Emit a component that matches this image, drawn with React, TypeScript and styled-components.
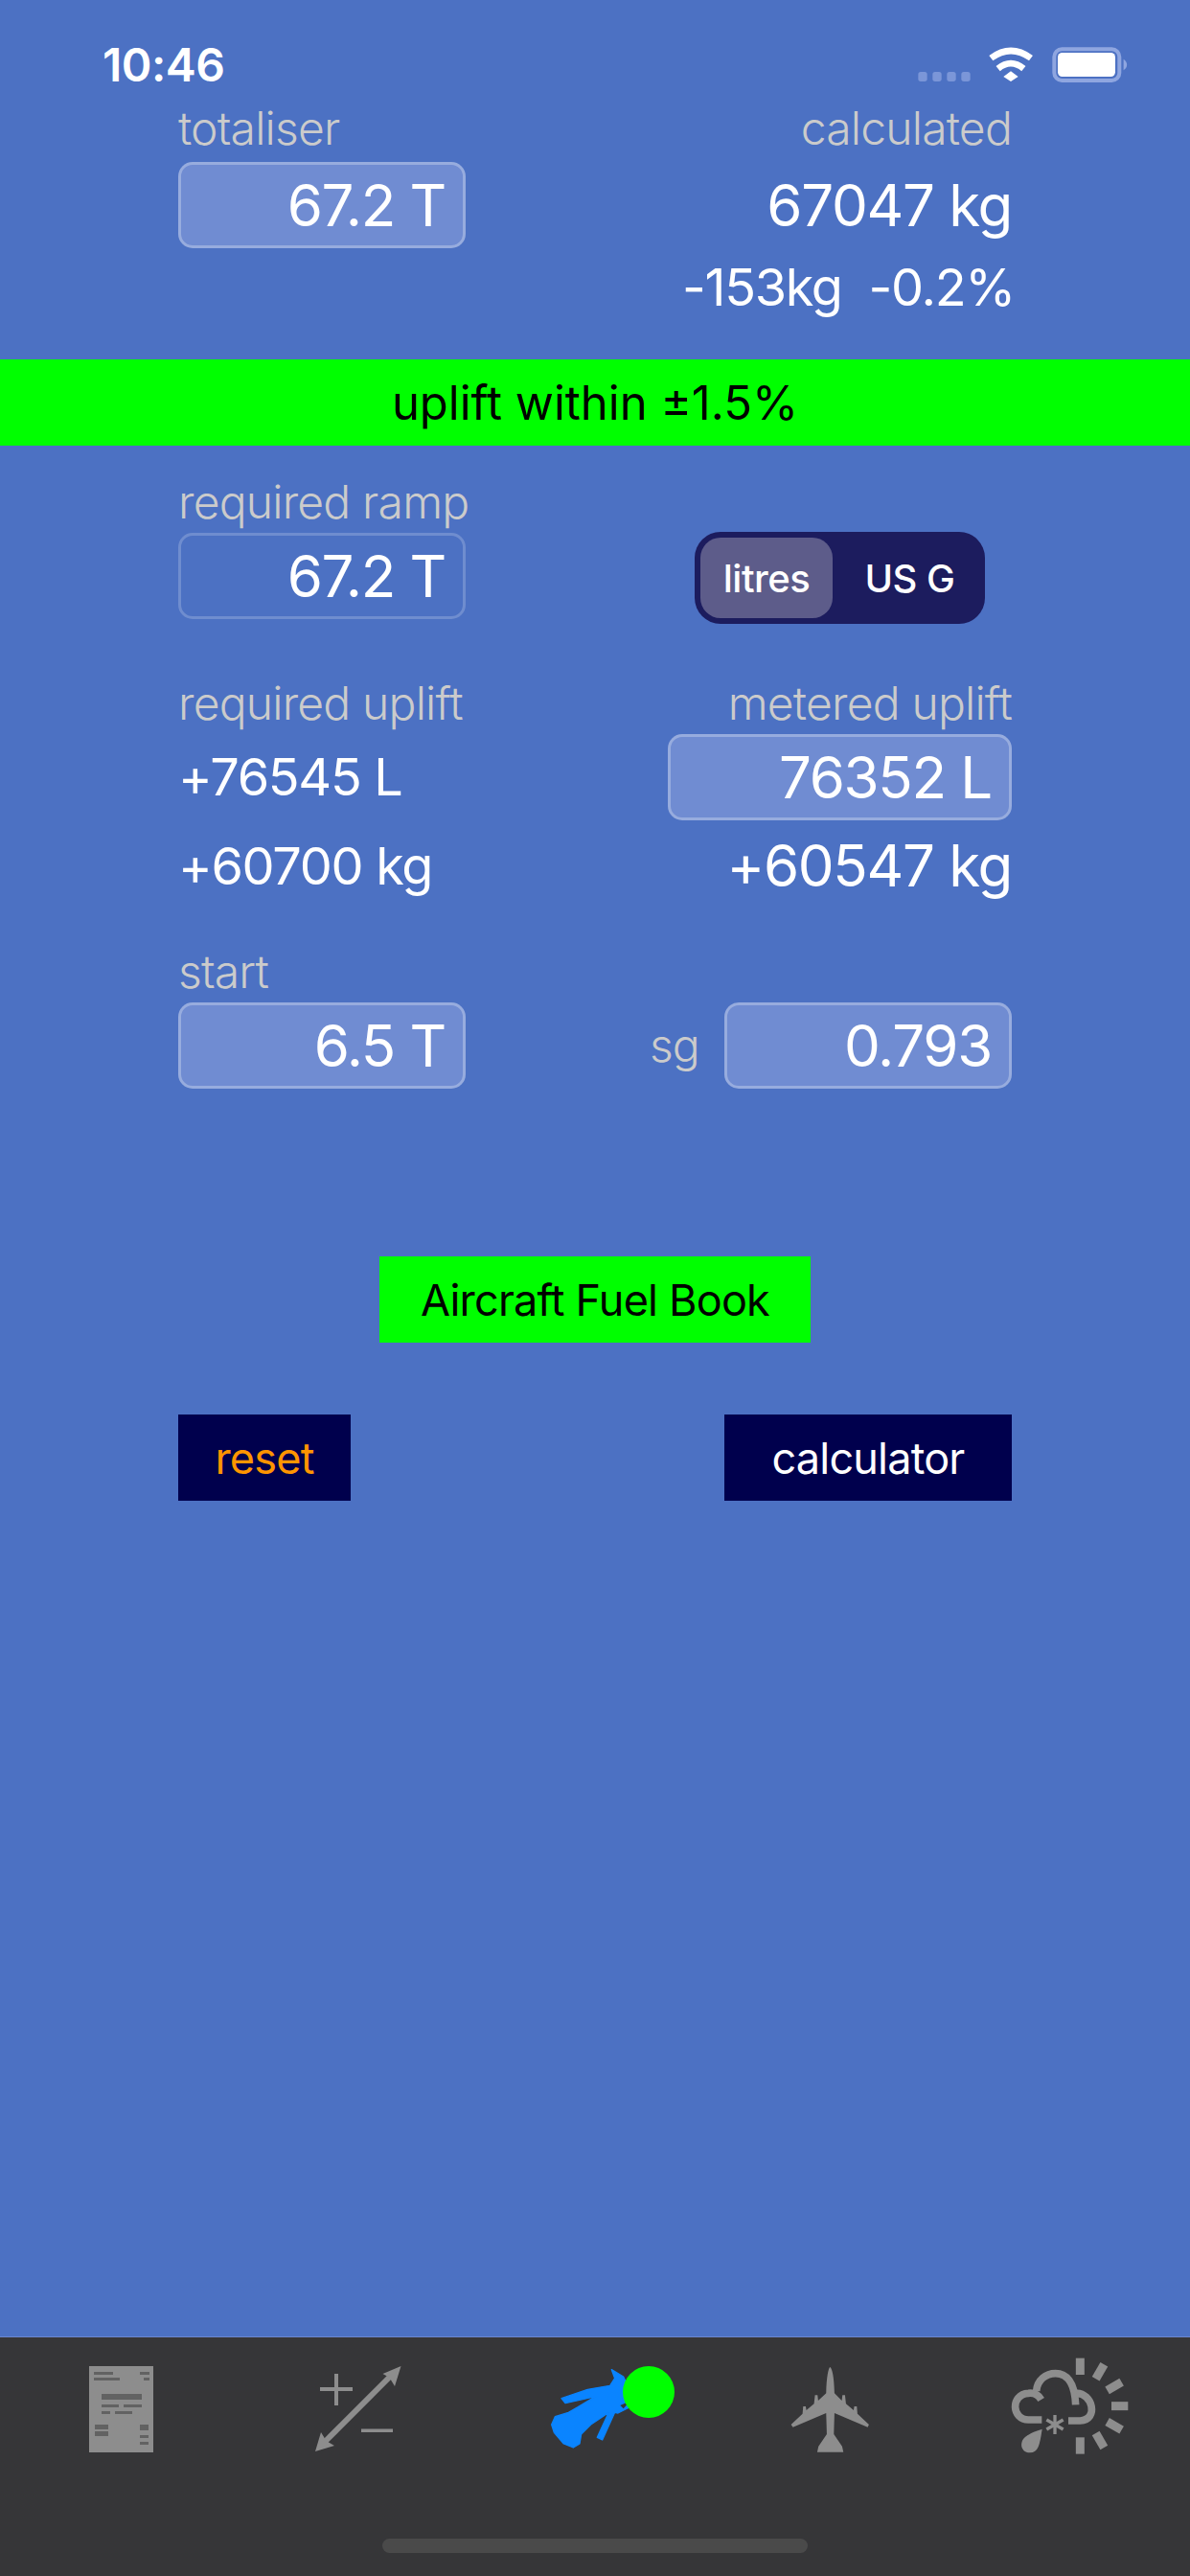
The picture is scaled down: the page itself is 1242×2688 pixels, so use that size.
import React from "react";
import styled, { createGlobalStyle } from "styled-components";

const Global = createGlobalStyle`
  html, body { margin: 0; padding: 0; background: #4c71c3; }
  * { box-sizing: border-box; }
`;

const Screen = styled.div`
  width: 1242px;
  height: 2688px;
  display: flex;
  flex-direction: column;
  background: #4c71c3;
  font-family: Inter, "Liberation Sans", sans-serif;
  color: #fff;
  overflow: hidden;
`;

const StatusBar = styled.div`
  height: 112px;
  flex: none;
  display: flex;
  justify-content: space-between;
  align-items: flex-start;
  padding: 40px 62px 0 107px;
`;

const Time = styled.div`
  font-size: 48px;
  line-height: 56px;
  font-weight: 600;
  letter-spacing: -0.5px;
`;

const StatusIcons = styled.svg`
  width: 230px;
  height: 50px;
  margin-top: 9px;
  display: block;
`;

const Section = styled.div<{ $top?: number }>`
  padding: 0 186px;
  margin-top: ${(p) => p.$top ?? 0}px;
  display: flex;
  justify-content: space-between;
  align-items: flex-start;
  flex: none;
`;

const Col = styled.div<{ $end?: boolean }>`
  display: flex;
  flex-direction: column;
  align-items: ${(p) => (p.$end ? "flex-end" : "flex-start")};
`;

const Label = styled.div<{ $h?: number }>`
  height: ${(p) => p.$h ?? 54}px;
  font-size: 48px;
  line-height: 44px;
  font-weight: 300;
  color: #cbcbcb;
  letter-spacing: -0.8px;
  white-space: nowrap;
`;

const SgLabel = styled(Label)`
  line-height: 54px;
`;

const Field = styled.div<{ $w?: number; $filled?: boolean }>`
  width: ${(p) => p.$w ?? 300}px;
  height: 90px;
  border: 3px solid rgba(255, 255, 255, ${(p) => (p.$filled ? 0.28 : 0.2)});
  border-radius: 15px;
  background: ${(p) => (p.$filled ? "#708cd2" : "transparent")};
  display: flex;
  align-items: center;
  justify-content: flex-end;
  padding-right: 18px;
  font-size: 60px;
  letter-spacing: -1.3px;
  font-weight: 400;
  white-space: nowrap;
`;

const Value = styled.div<{ $size?: number; $h?: number }>`
  font-size: ${(p) => p.$size ?? 60}px;
  line-height: ${(p) => p.$h ?? 90}px;
  letter-spacing: -1.3px;
  white-space: nowrap;
`;

const Delta = styled(Value)`
  margin-right: -3px;
`;

const Banner = styled.div`
  flex: none;
  margin-top: 34px;
  height: 90px;
  background: #00ff00;
  color: #000;
  font-size: 49px;
  display: flex;
  align-items: center;
  justify-content: center;
`;

const Segmented = styled.div`
  width: 303px;
  height: 96px;
  margin: 53px 28px 0 0;
  padding: 6px;
  border-radius: 27px;
  background: #1c1c5e;
  display: flex;
`;

const Segment = styled.div<{ $active?: boolean }>`
  flex: ${(p) => (p.$active ? "0 0 138px" : "1")};
  border-radius: 21px;
  background: ${(p) => (p.$active ? "#5d5c8a" : "transparent")};
  display: flex;
  align-items: center;
  justify-content: center;
  padding-left: ${(p) => (p.$active ? 0 : 8)}px;
  font-size: 40px;
  font-weight: 500;
  letter-spacing: -0.5px;
`;

const SgRow = styled.div`
  display: flex;
  align-items: center;
  gap: 26px;
  margin-top: 54px;
`;

const Center = styled.div`
  flex: none;
  margin-top: 175px;
  display: flex;
  justify-content: center;
`;

const Action = styled.div<{ $w: number; $variant: "green" | "navy" | "orange" }>`
  width: ${(p) => p.$w}px;
  height: 90px;
  display: flex;
  align-items: center;
  justify-content: center;
  font-size: 45px;
  letter-spacing: -0.8px;
  background: ${(p) => (p.$variant === "green" ? "#00ff00" : "#00004d")};
  color: ${(p) => (p.$variant === "green" ? "#000" : p.$variant === "orange" ? "#ff9500" : "#fff")};
`;

const TabBar = styled.div`
  margin-top: auto;
  height: 250px;
  flex: none;
  background: #363638;
  border-top: 1px solid #6a86cf;
  display: flex;
  flex-direction: column;
`;

const Tabs = styled.div`
  display: grid;
  grid-template-columns: repeat(5, 1fr);
  padding-top: 21px;
`;

const Tab = styled.div`
  position: relative;
  display: flex;
  justify-content: center;
`;

const TabIcon = styled.svg`
  width: 160px;
  height: 110px;
  display: block;
  filter: blur(0.7px);
`;

const NozzleSvg = styled(TabIcon)`
  filter: blur(0.4px);
`;

const Badge = styled.div`
  position: absolute;
  left: 153px;
  top: 9px;
  width: 54px;
  height: 54px;
  border-radius: 50%;
  background: #00ff00;
`;

const HomeBar = styled.div`
  width: 444px;
  height: 15px;
  border-radius: 8px;
  background: #4a4a4a;
  margin: auto auto 24px;
`;

const G = "#8d8d8d";

const DocIcon = () => (
  <TabIcon viewBox="0 0 160 110">
    <rect x="49" y="9" width="67" height="90" fill={G} />
    <g fill="#626262">
      <rect x="54" y="15" width="20" height="3" />
      <rect x="54" y="21" width="27" height="3" />
      <rect x="102" y="15" width="10" height="3" />
      <rect x="106" y="21" width="6" height="3" />
      <rect x="62" y="38" width="42" height="6" />
      <rect x="62" y="49" width="18" height="3" />
      <rect x="85" y="49" width="19" height="3" />
      <rect x="62" y="56" width="9" height="3" />
      <rect x="76" y="56" width="18" height="3" />
      <rect x="55" y="70" width="14" height="5" />
      <rect x="55" y="77" width="14" height="5" />
      <rect x="102" y="70" width="9" height="6" />
      <rect x="102" y="81" width="9" height="3" />
      <rect x="102" y="88" width="9" height="3" />
    </g>
  </TabIcon>
);

const ArrowIcon = () => (
  <TabIcon viewBox="0 0 160 110">
    <line x1="46" y1="88" x2="115" y2="19" stroke={G} strokeWidth="6" />
    <g fill={G}>
      <path d="M125.5 9 L119 30 L113.5 21 L106.5 17 Z" />
      <path d="M36 98 L42 78 L47.5 87 L56 92 Z" />
      <rect x="41" y="31" width="34" height="4" />
      <rect x="56" y="17" width="4" height="33" />
      <rect x="84" y="74.5" width="33" height="3.5" />
    </g>
  </TabIcon>
);

const NozzleIcon = () => (
  <NozzleSvg viewBox="0 0 160 110">
    <g transform="translate(19,-30) scale(0.3333)">
      <path
        fill="#0a84ff"
        stroke="#0a84ff"
        strokeWidth="4"
        strokeLinejoin="round"
        d="M78 218 L160 190 L230 178 L245 155 L235 128 L272 150 L300 210 L312 218 L310 236 L255 264 L245 262 L206 348 L190 340 L226 262 L170 300 L140 330 L135 360 L115 372 L85 360 L55 325 L47 300 L58 275 L100 262 L130 245 L185 212 L90 233 Z"
      />
      <path fill="#363638" d="M262 240 L295 225 L272 250 Z" />
    </g>
  </NozzleSvg>
);

const PlaneIcon = () => (
  <TabIcon viewBox="0 0 160 110">
    <g transform="translate(20.6,0) scale(0.3333)" fill={G}>
      <path d="M170 30 C177 34 183 60 184 112 L207 135 L209 118 L217 118 L220 145 L244 165 L246 153 L254 153 L256 176 L292 210 L288 218 L184 174 L182 240 L208 278 L212 296 L130 296 L134 278 L160 240 L158 174 L54 218 L48 210 L84 176 L86 153 L94 153 L96 165 L120 145 L123 118 L131 118 L133 135 L158 112 C159 60 165 34 170 30 Z" />
    </g>
  </TabIcon>
);

const rayAngles = [0, 30, 60, 90, 120, 150, 180];
const flakeAngles = [0, 60, 120];

const WeatherIcon = () => (
  <TabIcon viewBox="0 0 160 110">
    <g transform="translate(2,-10) scale(0.3333)">
      <g fill="none" stroke={G} strokeWidth="23">
        <path d="M142 225 H100 C48 225 42 146 100 142 C118 140 132 148 140 162" />
        <path d="M125 135 C128 100 155 80 185 80 C218 80 245 105 248 178" />
        <path d="M250 142 C300 140 322 225 262 228 H225" />
      </g>
      <g stroke={G} strokeWidth="27">
        {rayAngles.map((a) => (
          <line key={a} x1="262" y1="84" x2="262" y2="32" transform={`rotate(${a} 262 182)`} />
        ))}
      </g>
      <g stroke={G} strokeWidth="10">
        {flakeAngles.map((a) => (
          <line key={a} x1="183" y1="210" x2="183" y2="270" transform={`rotate(${a} 183 240)`} />
        ))}
      </g>
      <path d="M143 254 C136 300 132 328 105 328 C84 328 74 310 80 293 C86 275 115 262 143 254 Z" fill={G} />
    </g>
  </TabIcon>
);

export default function App() {
  return (
    <Screen>
      <Global />
      <StatusBar>
        <Time>10:46</Time>
        <StatusIcons viewBox="0 0 230 50">
          <g transform="translate(-10,-19) scale(0.3333)">
            <g fill="#7b96d8">
              <rect x="55" y="135" width="28" height="30" rx="8" />
              <rect x="100" y="135" width="28" height="30" rx="8" />
              <rect x="145" y="135" width="28" height="30" rx="8" />
              <rect x="190" y="135" width="28" height="30" rx="8" />
            </g>
            <g fill="none" stroke="#fff" strokeWidth="20">
              <path d="M283 92 Q345 46 408 92" />
              <path d="M305 125 Q345 92 385 125" />
            </g>
            <path d="M345 133 L368 150 L345 165 L322 150 Z" fill="#fff" />
            <rect x="481" y="64" width="204" height="98" rx="24" fill="none" stroke="#8fa6e0" strokeWidth="12" />
            <rect x="492" y="75" width="180" height="75" rx="14" fill="#fff" />
            <path d="M698 95 C712 105 712 120 698 130 Z" fill="#8fa6e0" />
          </g>
        </StatusIcons>
      </StatusBar>

      <Section>
        <Col>
          <Label $h={57}>totaliser</Label>
          <Field $filled>67.2 T</Field>
        </Col>
        <Col $end>
          <Label $h={57}>calculated</Label>
          <Value>67047 kg</Value>
          <Delta $size={54} $h={82}>-153kg&nbsp;&nbsp;-0.2%</Delta>
        </Col>
      </Section>

      <Banner>uplift within ±1.5%</Banner>

      <Section $top={37}>
        <Col>
          <Label>required ramp</Label>
          <Field>67.2 T</Field>
        </Col>
        <Segmented>
          <Segment $active>litres</Segment>
          <Segment>US G</Segment>
        </Segmented>
      </Section>

      <Section $top={61}>
        <Col>
          <Label>required uplift</Label>
          <Value $size={54}>+76545 L</Value>
          <Value $size={54} $h={95}>+60700 kg</Value>
        </Col>
        <Col $end>
          <Label>metered uplift</Label>
          <Field $w={359} $filled>76352 L</Field>
          <Value $h={95}>+60547 kg</Value>
        </Col>
      </Section>

      <Section $top={41}>
        <Col>
          <Label>start</Label>
          <Field $filled>6.5 T</Field>
        </Col>
        <SgRow>
          <SgLabel>sg</SgLabel>
          <Field $filled>0.793</Field>
        </SgRow>
      </Section>

      <Center>
        <Action $w={450} $variant="green">Aircraft Fuel Book</Action>
      </Center>

      <Section $top={75}>
        <Action $w={180} $variant="orange">reset</Action>
        <Action $w={300} $variant="navy">calculator</Action>
      </Section>

      <TabBar>
        <Tabs>
          <Tab><DocIcon /></Tab>
          <Tab><ArrowIcon /></Tab>
          <Tab><NozzleIcon /><Badge /></Tab>
          <Tab><PlaneIcon /></Tab>
          <Tab><WeatherIcon /></Tab>
        </Tabs>
        <HomeBar />
      </TabBar>
    </Screen>
  );
}
